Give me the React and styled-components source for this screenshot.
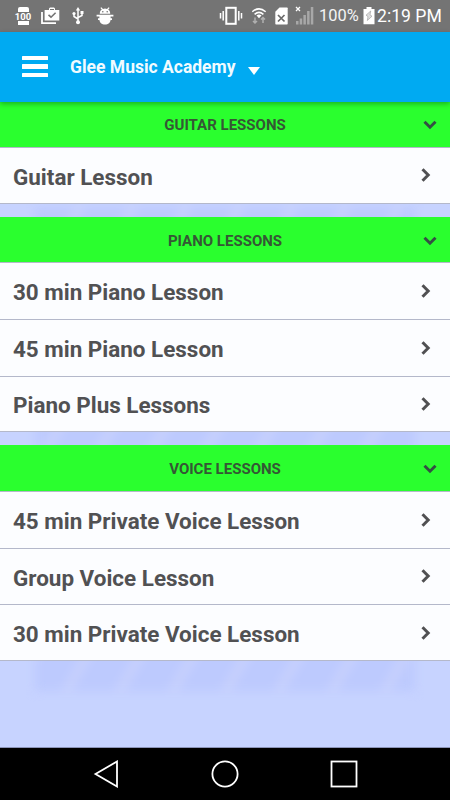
import React, { useState } from "react";
import styled, { createGlobalStyle } from "styled-components";

const sections = [
  { title: "GUITAR LESSONS", lessons: ["Guitar Lesson"] },
  {
    title: "PIANO LESSONS",
    lessons: ["30 min Piano Lesson", "45 min Piano Lesson", "Piano Plus Lessons"],
  },
  {
    title: "VOICE LESSONS",
    lessons: [
      "45 min Private Voice Lesson",
      "Group Voice Lesson",
      "30 min Private Voice Lesson",
    ],
  },
];

const StatusBar = () => (
  <Status>
    <Group>
      <BatteryLevel>100</BatteryLevel>
      {/* work check */}
      <svg width="19" height="18" viewBox="0 0 19 18" fill="none">
        <path d="M1 5v11.2h14" stroke="#fff" strokeWidth="1.8" />
        <path d="M4 3h4V1.5L9 .5h4l1 1V3h4.3v10.6H3.6V3z" fill="#fff" />
        <path d="M9 2h4v1H9z" fill="#747474" />
        <path d="M7.5 7.8l2.5 2.4 4.6-4.5" stroke="#747474" strokeWidth="1.6" />
      </svg>
      {/* usb */}
      <svg width="12" height="18" viewBox="0 0 12 18" fill="none" stroke="#fff" strokeWidth="1.5">
        <path d="M6 3v12M6 12L2 9.500V6.500M6 10.500l4-2V5.500" />
        <path d="M6 0l2.200 3.500H3.800z" fill="#fff" stroke="none" />
        <circle cx="6" cy="15.3" r="2" fill="#fff" stroke="none" />
        <circle cx="2" cy="6.5" r="1.6" fill="#fff" stroke="none" />
        <path d="M8.500 4h3v3h-3z" fill="#fff" stroke="none" />
      </svg>
      {/* android debug */}
      <svg width="18" height="18" viewBox="0 0 18 18" fill="#fff">
        <path d="M3.8 6.8C3.8 4.8 4.600 3.300 5.800 2.600L4.400.9l.9-.7L7 2a5 5 0 0 1 4 0L12.700.2l.9.7L12.200 2.600c1.200.7 2 2.200 2 4.200z" />
        <path d="M.6 7.700h16.800v1.900h-2.800v2.800c0 3-2.400 5.100-5.600 5.100s-5.600-2.100-5.600-5.100V9.600H.6z" />
        <path d="M2 11.200h2v1.800H2zM14 11.200h2v1.800h-2z" />
        <circle cx="6.800" cy="4.700" r=".8" fill="#747474" />
        <circle cx="11.200" cy="4.700" r=".8" fill="#747474" />
      </svg>
    </Group>
    <Tray>
      {/* vibrate */}
      <svg width="24" height="20" viewBox="0 0 24 20" fill="none" stroke="#fff" strokeWidth="1.5">
        <rect x="7.3" y="1.8" width="9.4" height="16" strokeWidth="2" />
        <path d="M4.2 5v9.500M1.500 7v5.500M19.800 5v9.500M22.500 7v5.500" />
      </svg>
      {/* wifi */}
      <svg width="16" height="18" viewBox="0 0 16 18" fill="none" stroke="#fff" strokeWidth="1.5">
        <path d="M1.300 4.700Q8-1 14.700 4.700M3.600 7.400Q8 3.400 12.400 7.400" />
        <path d="M5.500 8.600Q8 6.500 10.500 8.600L8 11.300z" fill="#fff" stroke="none" />
        <path d="M4 10.500v5.500M2 14l2 2 2-2M12 16v-5.500M10 12.500l2-2 2 2" stroke="#b0b0b0" />
      </svg>
      {/* sim missing */}
      <svg width="13" height="18" viewBox="0 0 13 18">
        <path d="M4.500.5H12q.7 0 .7.700v15.600q0 .7-.7.700H1q-.7 0-.7-.7V4.700z" fill="#fff" />
        <path d="M3 8l6.500 6.500M9.500 8L3 14.500" stroke="#6a6a6a" strokeWidth="1.7" />
      </svg>
      {/* signal */}
      <svg width="19" height="19" viewBox="0 0 19 19" fill="#a8a8a8">
        <path d="M1 15h2.500v3.500H1zM4.700 12.500h2.500v6H4.700zM8.400 9h2.500v9.500H8.400zM12.100 5h2.500v13.500h-2.500zM15.800 1h2.500v17.500h-2.500z" />
        <path d="M1 1l4 4M5 1L1 5" stroke="#fff" strokeWidth="1.3" />
      </svg>
      <Percent>100%</Percent>
      {/* charging battery */}
      <svg width="12" height="19" viewBox="0 0 12 19">
        <path d="M3.500 1h5v2h3v15.300H.5V3h3z" fill="#fff" />
        <path d="M7.700 5L3 9.200l2 1.400-.7 3.900L9 10.200 7 8.900z" fill="#ddd" stroke="#999" strokeWidth=".6" />
      </svg>
      <Clock>2:19 PM</Clock>
    </Tray>
  </Status>
);

const Chevron = ({ down }) =>
  down ? (
    <svg width="14" height="10" viewBox="0 0 14 10" fill="none" stroke="#345044" strokeWidth="3">
      <path d="M1.500 1.800L7 7.200l5.500-5.400" />
    </svg>
  ) : (
    <svg width="10" height="14" viewBox="0 0 10 14" fill="none" stroke="#505052" strokeWidth="3">
      <path d="M1.500 1.200L7.200 7l-5.700 5.800" />
    </svg>
  );

export default function App() {
  const [closed, setClosed] = useState({});

  const toggle = (title) => {
    setClosed({ ...closed, [title]: !closed[title] });
  };

  return (
    <>
      <GlobalStyle />
      <Screen>
        <StatusBar />
        <Header>
          <MenuButton aria-label="Menu">
            <span />
            <span />
            <span />
          </MenuButton>
          <Title>Glee Music Academy</Title>
          <Caret />
        </Header>

        <Content>
          <Backdrop />
          {sections.map(({ title, lessons }) => (
            <Section key={title}>
              <SectionHeader onClick={() => toggle(title)}>
                <SectionTitle>{title}</SectionTitle>
                <Chevron down />
              </SectionHeader>
              {!closed[title] &&
                lessons.map((lesson) => (
                  <Lesson key={lesson}>
                    <LessonName>{lesson}</LessonName>
                    <Chevron />
                  </Lesson>
                ))}
            </Section>
          ))}
        </Content>

        <NavBar>
          <svg width="26" height="28" viewBox="0 0 26 28">
            <path d="M2.500 14L24 1.500v25z" />
          </svg>
          <svg width="28" height="28" viewBox="0 0 28 28">
            <circle cx="14" cy="14" r="12.6" />
          </svg>
          <svg width="28" height="28" viewBox="0 0 28 28">
            <rect x="1.5" y="1.5" width="25" height="25" />
          </svg>
        </NavBar>
      </Screen>
    </>
  );
}

const GlobalStyle = createGlobalStyle`
  body {
    margin: 0;
  }
  * {
    box-sizing: border-box;
  }
  svg {
    display: block;
    flex: none;
  }
`;

const Screen = styled.div`
  display: flex;
  flex-direction: column;
  width: 450px;
  height: 800px;
  overflow: hidden;
  background: #c7d3ff;
  font-family: Roboto, sans-serif;
`;

const Status = styled.div`
  display: flex;
  justify-content: space-between;
  flex: none;
  height: 31.5px;
  padding: 0 10px 0 14px;
  background: #747474;
  color: #fff;
`;

const Group = styled.div`
  display: flex;
  align-items: center;
  gap: 9px;
  svg:nth-child(3) {
    margin: 0 3px;
  }
`;

const BatteryLevel = styled.span`
  display: flex;
  flex-direction: column;
  align-items: center;
  width: 18px;
  font-size: 9.5px;
  font-weight: 700;
  line-height: 9px;
  &::before {
    content: "";
    width: 11px;
    height: 5px;
    border-radius: 2px 2px 0 0;
    background: #fff;
  }
  &::after {
    content: "";
    width: 11px;
    height: 4px;
    background: #fff;
  }
`;

const Tray = styled.div`
  display: flex;
  align-items: center;
  gap: 8px;
  svg:nth-child(3) {
    margin-right: -1px;
  }
`;

const Percent = styled.span`
  width: 36px;
  margin-left: -3px;
  font-size: 16.4px;
  line-height: 32px;
  white-space: nowrap;
  color: #f4f4f4;
`;

const Clock = styled.span`
  width: 64px;
  margin-left: -6px;
  margin-right: -1px;
  font-size: 17.6px;
  line-height: 32px;
  white-space: nowrap;
`;

const Header = styled.header`
  display: flex;
  align-items: center;
  flex: none;
  position: relative;
  z-index: 1;
  height: 70px;
  padding-left: 22px;
  background: #00aaf2;
  box-shadow: 0 2px 5px rgba(0, 0, 0, 0.3);
`;

const MenuButton = styled.button`
  display: flex;
  flex-direction: column;
  gap: 4.5px;
  width: 26px;
  padding: 0;
  border: none;
  background: none;
  cursor: pointer;
  span {
    height: 4.3px;
    border-radius: 0.5px;
    background: #fff;
  }
`;

const Title = styled.h1`
  margin: 1px 0 0 22px;
  font-size: 17.5px;
  font-weight: 700;
  line-height: 24px;
  color: #f0fbff;
`;

const Caret = styled.span`
  margin: 9px 0 0 12px;
  border: 6.5px solid transparent;
  border-top: 8px solid #fff;
  border-bottom: 0;
`;

const Content = styled.main`
  position: relative;
  flex: 1;
  min-height: 0;
  border-bottom: 1px solid #8c94b8;
`;

/* faint slanted keys behind the list */
const Backdrop = styled.div`
  position: absolute;
  top: 105px;
  left: 35px;
  width: 380px;
  height: 484px;
  background: repeating-linear-gradient(
    120deg,
    #bdcafe 0 32px,
    #c8d1fd 38px 41px,
    #bdcafe 46px
  );
  filter: blur(5px);
`;

const Section = styled.section`
  position: relative;
  margin-bottom: 13.2px;
`;

const SectionHeader = styled.div`
  display: flex;
  align-items: center;
  height: 45.6px;
  padding: 2px 13px 0 27px;
  background: #2aff2e;
  cursor: pointer;
`;

const SectionTitle = styled.h2`
  flex: 1;
  margin: 0;
  font-size: 15px;
  font-weight: 700;
  line-height: 20px;
  text-align: center;
  color: #355735;
`;

const Lesson = styled.div`
  display: flex;
  align-items: center;
  justify-content: space-between;
  height: 56.6px;
  padding: 0 19px 0 13px;
  border-top: 1px solid #b4b8ca;
  background: #fcfdff;
  cursor: pointer;
  &:last-child {
    border-bottom: 1px solid #b4b8ca;
  }
`;

const LessonName = styled.span`
  padding-top: 2.4px;
  font-size: 22.45px;
  font-weight: 700;
  line-height: 28px;
  color: #515153;
`;

const NavBar = styled.nav`
  display: flex;
  align-items: center;
  justify-content: space-between;
  flex: none;
  height: 52.5px;
  padding: 0 92px 0 93px;
  background: #000;
  svg {
    fill: none;
    stroke: #fff;
    stroke-width: 1.8px;
  }
`;
